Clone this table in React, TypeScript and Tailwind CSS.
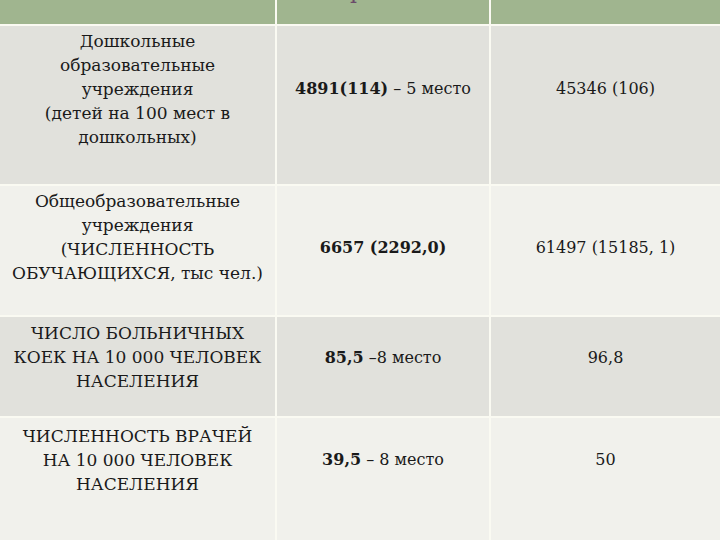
const rows = [
  {
    bg: "bg-[#e1e1dc]",
    label: ["Дошкольные", "образовательные", "учреждения", "(детей на 100 мест в", "дошкольных)"],
    labelPad: "pt-[3px]",
    valuePad: "pt-[51px]",
    value: (
      <>
        <b>4891(114)</b> – 5 место
      </>
    ),
    ref: "45346 (106)",
  },
  {
    bg: "bg-[#f1f1ec]",
    label: ["Общеобразовательные", "учреждения", "(ЧИСЛЕННОСТЬ", "ОБУЧАЮЩИХСЯ, тыс чел.)"],
    labelPad: "pt-[3px]",
    valuePad: "pt-[50px]",
    value: <b>6657 (2292,0)</b>,
    ref: "61497 (15185, 1)",
  },
  {
    bg: "bg-[#e1e1dc]",
    label: ["ЧИСЛО БОЛЬНИЧНЫХ", "КОЕК НА 10 000 ЧЕЛОВЕК", "НАСЕЛЕНИЯ"],
    labelPad: "pt-[4px]",
    valuePad: "pt-[29px]",
    value: (
      <>
        <b>85,5</b> –8 место
      </>
    ),
    ref: "96,8",
  },
  {
    bg: "bg-[#f1f1ec]",
    label: ["ЧИСЛЕННОСТЬ ВРАЧЕЙ", "НА 10 000 ЧЕЛОВЕК", "НАСЕЛЕНИЯ"],
    labelPad: "pt-[6px]",
    valuePad: "pt-[30px]",
    value: (
      <>
        <b>39,5</b> – 8 место
      </>
    ),
    ref: "50",
  },
];

export default function App() {
  return (
    <div className="h-[540px] w-[720px] overflow-hidden bg-[#fafaf2] font-['DejaVu_Serif',serif] text-[17px] leading-[24px] text-[#1a1a1a]">
      <div className="grid grid-cols-[275px_212px_1fr] grid-rows-[24px_158px_129px_99px_1fr] gap-[2px] h-[560px]">
        {/* header, cut off at the top of the slide */}
        <div className="bg-[#a0b58f]" />
        <div className="bg-[#a0b58f] overflow-hidden">
          <div className="-mt-[21px] pl-[73px] text-[#6b4a6a] text-[22px]">р</div>
        </div>
        <div className="bg-[#a0b58f]" />

        {rows.map((r, i) => (
          <div key={i} className="contents">
            <div className={`${r.bg} ${r.labelPad} text-center`}>
              {r.label.map((l) => (
                <div key={l}>{l}</div>
              ))}
            </div>
            <div className={`${r.bg} ${r.valuePad} text-center text-[16px]`}>{r.value}</div>
            <div className={`${r.bg} ${r.valuePad} text-center text-[16px]`}>{r.ref}</div>
          </div>
        ))}
      </div>
    </div>
  );
}
